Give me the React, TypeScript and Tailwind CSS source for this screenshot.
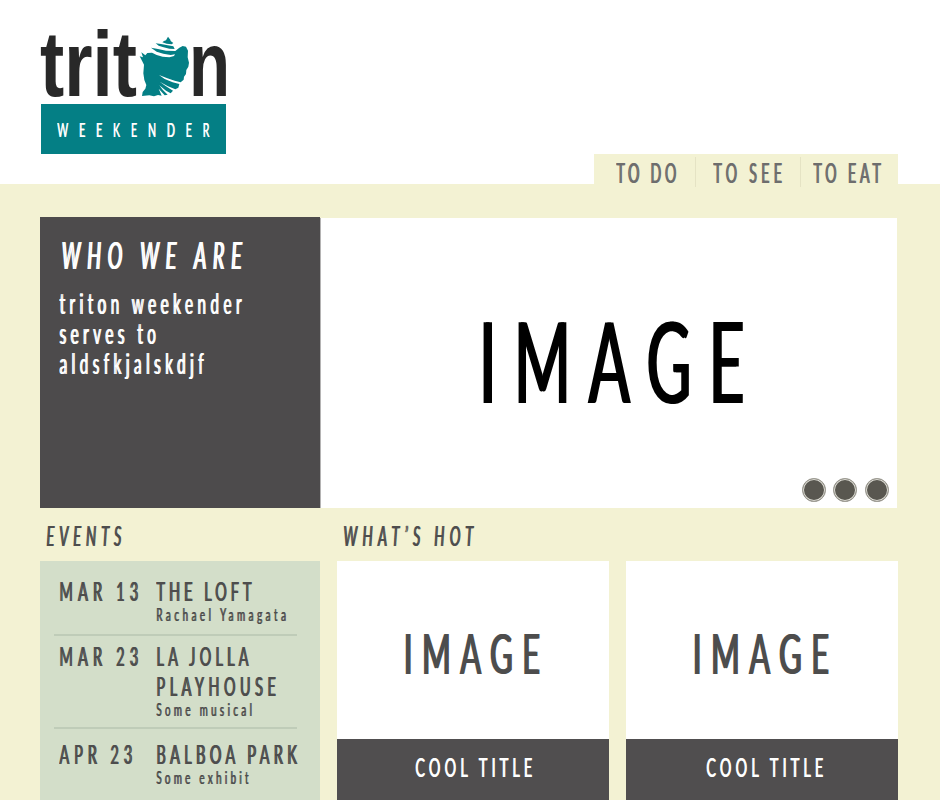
import type { ReactNode } from 'react';

const stems = {
  light: '[text-shadow:0.04em_0_0_currentColor]',
  medium: '[text-shadow:0.055em_0_0_currentColor]',
  heavy: '[text-shadow:0.075em_0_0_currentColor]',
};

// Condensed lettering: Lato narrowed horizontally, with its vertical stems thickened.
function Narrow({
  children,
  className = '',
  stem = 'heavy',
}: {
  children: ReactNode;
  className?: string;
  stem?: keyof typeof stems;
}) {
  return (
    <span className={`block w-max origin-left scale-x-[.54] whitespace-nowrap ${stems[stem]} ${className}`}>
      {children}
    </span>
  );
}

function Shell() {
  return (
    <svg viewBox="0 0 168 198" className="mt-[2px] -ml-px h-[66px] w-[56px] shrink-0" fill="#047f85">
      <path d="M96 8 L103 17 L104 21 L112 27 L107 31 L92 29 L79 25 L84 21 L90 19 Z" />
      <path d="M59 28 L75 30 L95 34 L112 37 L116 45 L100 44 L80 39 L68 35 Z" />
      <path d="M45 41 L66 45 L90 50 L118 51 L130 41 L140 36 L150 38 L156 50 L155 70 L159 86 L157 98 L151 108 L150 120 L144 128 L143 137 L134 145 L116 140 L94 133 L69 123 L86 135 L110 145 L130 150 L127 161 L118 166 L96 157 L71 143 L90 157 L111 170 L104 178 L90 170 L70 154 L80 167 L95 182 L86 184 L68 164 L77 185 L66 183 L54 187 L40 184 L18 186 L20 174 L28 164 L31 153 L25 138 L22 118 L24 92 L18 80 L11 67 L21 70 L16 55 L28 64 L34 57 L48 56 L62 63 L80 68 L100 70 L114 66 L117 61 L104 63 L82 59 L62 53 Z" />
    </svg>
  );
}

function Logo() {
  return (
    <div className="ml-[41px] w-[185px]">
      <div className="flex h-[104px] pt-[32px] font-['Liberation_Sans',sans-serif] text-[92px] leading-[65px] font-bold text-[#282828]">
        <div className="w-[96px] shrink-0">
          <span className="-ml-px block w-max origin-left scale-x-[.79] whitespace-nowrap">trit</span>
        </div>
        <Shell />
        <span className="-ml-[3px] block w-0 origin-left scale-x-[.73]">n</span>
      </div>
      <div className="h-[50px] bg-[#047f85] pt-[10px] pl-[16px] text-white">
        <Narrow stem="medium" className="text-[19.5px] leading-[31px] tracking-[20.2px]">
          WEEKENDER
        </Narrow>
      </div>
    </div>
  );
}

function Dot() {
  return (
    <span className="block size-6 rounded-full border border-[#a09e95] bg-[#595750] shadow-[inset_0_0_0_1px_#dddcd4]" />
  );
}

function HotCard({ titlePad }: { titlePad: string }) {
  return (
    <div className="flex w-[272px] flex-col">
      <div className="h-[178px] bg-white pt-[63px] pl-[66px] text-[#4d4d4d]">
        <Narrow stem="medium" className="text-[57px] leading-[57px] tracking-[17.8px]">
          IMAGE
        </Narrow>
      </div>
      <div className={`h-[61px] bg-[#504e4f] pt-[13px] text-white ${titlePad}`}>
        <Narrow stem="medium" className="text-[26.5px] leading-[30px] tracking-[7.8px]">
          COOL TITLE
        </Narrow>
      </div>
    </div>
  );
}

export default function App() {
  return (
    <div className="flex h-[800px] w-[940px] flex-col overflow-hidden bg-[#f3f2d3] font-['Lato',sans-serif] text-[#4d4d4d]">
      <header className="flex h-[184px] shrink-0 items-start bg-white">
        <Logo />
        <nav className="mt-[154px] ml-[368px] flex h-[30px] w-[304px] bg-[#f3f2d3] pt-[3px] text-[26px] leading-[32px] text-[#6d6d6d]">
          <div className="h-[30px] w-[102px] shrink-0 border-r border-[#e5e3c4] pl-[22px]">
            <Narrow className="tracking-[7px]">TO DO</Narrow>
          </div>
          <div className="h-[30px] w-[105px] shrink-0 border-r border-[#e5e3c4] pl-[17px]">
            <Narrow className="tracking-[8.1px]">TO SEE</Narrow>
          </div>
          <div className="h-[30px] w-[97px] shrink-0 pl-[12px]">
            <Narrow className="tracking-[7.3px]">TO EAT</Narrow>
          </div>
        </nav>
      </header>

      <section className="mt-[33px] ml-[40px] flex h-[291px] shrink-0">
        <div className="w-[280px] bg-[#4d4b4c] text-white">
          <h1 className="pt-[18px] pl-[21px]">
            <Narrow className="text-[36px] leading-[40px] tracking-[12.7px] italic">WHO WE ARE</Narrow>
          </h1>
          <p className="mt-[13px] pl-[19px]">
            <Narrow className="text-[28px] leading-[30px] tracking-[8.4px]">
              triton weekender
              <br />
              serves to
              <br />
              aldsfkjalskdjf
            </Narrow>
          </p>
        </div>
        <div className="mt-px w-[577px] border-l border-[#b4b3b3] bg-white pt-[85px]">
          <div className="h-[175px] pl-[157px] text-black">
            <Narrow stem="light" className="text-[113px] leading-[113px] tracking-[33px]">
              IMAGE
            </Narrow>
          </div>
          <div className="flex gap-[7.5px] pl-[480.5px]">
            <Dot />
            <Dot />
            <Dot />
          </div>
        </div>
      </section>

      <div className="ml-[40px] flex gap-[17px]">
        <section className="w-[280px]">
          <h2 className="h-[53px] pt-[13px] pl-[6px]">
            <Narrow className="text-[26.5px] leading-[30px] tracking-[9.3px] italic">EVENTS</Narrow>
          </h2>
          <ul className="h-[239px] bg-[#d3dec9] pl-[14px] text-[26.5px] leading-[30px]">
            <li className="flex h-[73px] pt-[15px] pl-[5px]">
              <div className="w-[97px] shrink-0">
                <Narrow className="tracking-[9.8px]">MAR 13</Narrow>
              </div>
              <div className="w-0">
                <Narrow className="tracking-[7.6px]">THE LOFT</Narrow>
                <Narrow className="text-[18px] leading-[17px] tracking-[6.6px]">Rachael Yamagata</Narrow>
              </div>
            </li>
            <li className="flex h-[93px] w-[243px] border-t-2 border-[#bfccb8] pt-[5px] pl-[5px]">
              <div className="w-[97px] shrink-0">
                <Narrow className="tracking-[9.8px]">MAR 23</Narrow>
              </div>
              <div className="w-0">
                <Narrow className="tracking-[8px]">LA JOLLA</Narrow>
                <Narrow className="tracking-[8.5px]">PLAYHOUSE</Narrow>
                <Narrow className="text-[18px] leading-[17px] tracking-[6.3px]">Some musical</Narrow>
              </div>
            </li>
            <li className="flex h-[73px] w-[243px] border-t-2 border-[#bfccb8] pt-[10px] pl-[5px]">
              <div className="w-[97px] shrink-0">
                <Narrow className="tracking-[9.3px]">APR 23</Narrow>
              </div>
              <div className="w-0">
                <Narrow className="tracking-[8.3px]">BALBOA PARK</Narrow>
                <Narrow className="text-[18px] leading-[17px] tracking-[6.2px]">Some exhibit</Narrow>
              </div>
            </li>
          </ul>
        </section>

        <section>
          <h2 className="h-[53px] pt-[13px] pl-[6px]">
            <Narrow className="text-[26.5px] leading-[30px] tracking-[9.9px] italic">WHAT’S HOT</Narrow>
          </h2>
          <div className="flex gap-[17px]">
            <HotCard titlePad="pl-[78px]" />
            <HotCard titlePad="pl-[80px]" />
          </div>
        </section>
      </div>
    </div>
  );
}
